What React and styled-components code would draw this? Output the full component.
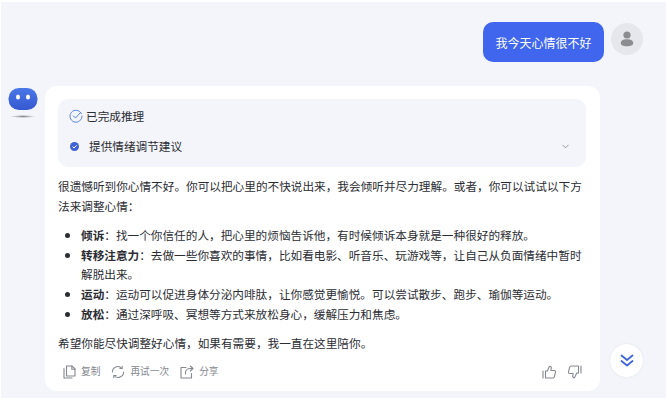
import React from "react";
import styled, { createGlobalStyle } from "styled-components";
import { ChevronDown } from "lucide-react";

const GlobalStyle = createGlobalStyle`
  html, body {
    margin: 0;
    padding: 0;
    background: #fff;
  }
  body {
    width: 669px;
    height: 413px;
    overflow: hidden;
    font-family: "Noto Sans CJK SC", "Liberation Sans", sans-serif;
  }
`;

const Page = styled.div`
  width: 665px;
  height: 396px;
  margin: 2px 0 0 1px;
  background: #f3f5fa;
  box-sizing: border-box;
  padding-top: 20px;
  overflow: hidden;
  display: flex;
  flex-direction: column;
`;

const UserRow = styled.div`
  display: flex;
  justify-content: flex-end;
  align-items: flex-start;
  gap: 7px;
  padding-right: 23px;
`;

const Bubble = styled.div`
  width: 121px;
  height: 40px;
  box-sizing: border-box;
  border-radius: 10px;
  background: #3f66ec;
  color: #fff;
  font-size: 12px;
  display: flex;
  align-items: center;
  justify-content: center;
`;

const UserAvatar = styled.div`
  width: 32px;
  height: 32px;
  margin-top: 1px;
  border-radius: 50%;
  background: #e6e7ec;
  display: flex;
  align-items: center;
  justify-content: center;
`;

const BotRow = styled.div`
  display: flex;
  align-items: flex-start;
  margin-top: 24px;
  padding-left: 7px;
`;

const BotAvatar = styled.div`
  width: 30px;
  height: 32px;
  margin-top: 2px;
  margin-right: 7px;
  flex: none;
`;

const Card = styled.div`
  width: 555px;
  height: 305px;
  flex: none;
  box-sizing: border-box;
  background: #fff;
  border-radius: 12px;
  padding: 13px 14px 0 13px;
  color: #2b2d33;
  font-size: 11.65px;
  line-height: 19.6px;
`;

const ThinkBox = styled.div`
  height: 68px;
  box-sizing: border-box;
  background: #f3f5fa;
  border-radius: 10px;
  padding: 6px 15px 0 11px;
`;

const ThinkTitle = styled.div`
  display: flex;
  align-items: center;
  gap: 3px;
  height: 20px;
  margin-top: 1px;
`;

const ThinkStep = styled.div`
  display: flex;
  align-items: center;
  height: 20px;
  margin-top: 10px;
  padding-left: 1px;
`;

const StepLabel = styled.span`
  margin-left: 10px;
  flex: 1;
`;

const Paragraph = styled.p`
  margin: ${(p) => p.$top || 0}px 0 0;
`;

const List = styled.ul`
  margin: 10px 0 0;
  padding: 0 0 0 23px;
  list-style: disc;
`;

const Item = styled.li`
  & > b {
    font-weight: 700;
  }
`;

const Actions = styled.div`
  display: flex;
  align-items: center;
  margin-top: 9px;
  padding: 0 4px 0 5px;
  color: #85888f;
  font-size: 9.7px;
`;

const Action = styled.span`
  display: flex;
  align-items: center;
  gap: 5px;
  margin-right: 11px;
`;

const Votes = styled.span`
  display: flex;
  gap: 12px;
  margin-left: auto;
`;

const ScrollButton = styled.div`
  width: 33px;
  height: 33px;
  margin: 258px 0 0 10px;
  flex: none;
  border-radius: 50%;
  background: #fff;
  box-shadow: 0 0 2px rgba(30, 40, 80, 0.12);
  display: flex;
  align-items: center;
  justify-content: center;
`;

const PersonIcon = () => (
  <svg width="14" height="16" viewBox="0 0 14 16">
    <circle cx="7" cy="4" r="3.6" fill="#8b8c90" />
    <path d="M0.8 12c0-2.4 2.2-3.8 6.2-3.8s6.2 1.4 6.2 3.8c0 2.2-2.4 3.2-6.2 3.2S0.8 14.200.8 12z" fill="#8b8c90" />
  </svg>
);

const RobotIcon = () => (
  <svg width="30" height="32" viewBox="0 0 30 32">
    <defs>
      <linearGradient id="head" x1="0" y1="0" x2="0" y2="1">
        <stop offset="0" stopColor="#4a78e6" />
        <stop offset="1" stopColor="#3558d0" />
      </linearGradient>
      <radialGradient id="shade">
        <stop offset="0" stopColor="#85868c" />
        <stop offset="1" stopColor="#85868c" stopOpacity="0" />
      </radialGradient>
    </defs>
    <rect x="0.500" y="0" width="29" height="22" rx="10.500" fill="url(#head)" />
    <ellipse cx="10" cy="9" rx="2" ry="2.500" fill="#fff" />
    <ellipse cx="20" cy="9" rx="2" ry="2.500" fill="#fff" />
    <ellipse cx="15" cy="28.500" rx="13" ry="1.500" fill="url(#shade)" />
  </svg>
);

const DoneIcon = () => (
  <svg width="14" height="14" viewBox="0 0 14 14" fill="none" stroke="#5a83dc" strokeWidth="1" strokeLinecap="round" strokeLinejoin="round">
    <path d="M12.400 4.600A6 6 0 1 0 13 7" />
    <path d="M4.300 6.800 6.500 9l5.200-5.600" />
  </svg>
);

const StepIcon = () => (
  <svg width="9" height="9" viewBox="0 0 9 9">
    <circle cx="4.500" cy="4.500" r="4.500" fill="#3f63d6" />
    <path d="M2.500 4.600 4 6l2.600-2.700" fill="none" stroke="#fff" strokeWidth="1" />
  </svg>
);

const Glyph = styled.svg`
  flex: none;
  fill: none;
  stroke: #85888f;
  stroke-width: 1.1;
  stroke-linejoin: round;
  stroke-linecap: round;
`;

const CopyIcon = () => (
  <Glyph width="13" height="14" viewBox="0 0 13 14">
    <path d="M3.500 1h5.500l3 3v7H3.500z" />
    <path d="M8.800 1v3.200H12" />
    <path d="M1 3.500V13h8" />
  </Glyph>
);

const RetryIcon = () => (
  <Glyph width="14" height="14" viewBox="0 0 15 14">
    <path d="M1.500 7a5.800 5.800 0 0 1 10-4" />
    <path d="M12 .8V3.300H9.500" />
    <path d="M13.500 7a5.800 5.800 0 0 1-10 4" />
    <path d="M3 13.200V10.700h2.500" />
  </Glyph>
);

const ShareIcon = () => (
  <Glyph width="14" height="14" viewBox="0 0 14 14">
    <path d="M6 2.500H1V13h10.500V8.500" />
    <path d="M5.500 9V7.500c0-2.500 2-4 5-4h2" />
    <path d="M10.300 1 13 3.500 10.300 6" />
  </Glyph>
);

const LikeIcon = () => (
  <Glyph width="14" height="14" viewBox="0 0 14 14">
    <path d="M1 6v7" />
    <path d="M3.500 6h1.800L7.500 1.200c1.500 0 2 1 1.800 2L8.800 5.500h3.400c1 0 1.500.8 1.300 1.600l-1.200 4.700c-.2.700-.7 1.200-1.500 1.200H3.500z" />
  </Glyph>
);

const DislikeIcon = () => (
  <Glyph width="14" height="14" viewBox="0 0 14 14">
    <path d="M13 1v7" />
    <path d="M10.500 8H8.700L6.500 12.800c-1.500 0-2-1-1.800-2l.5-2.300H1.800c-1 0-1.500-.8-1.300-1.600L1.700 2.200C1.900 1.500 2.400 1 3.200 1h7.300z" />
  </Glyph>
);

const DoubleChevron = () => (
  <svg width="16" height="16" viewBox="0 0 16 16" fill="none" stroke="#3f66d8" strokeWidth="1.800" strokeLinecap="round" strokeLinejoin="round">
    <path d="M2.500 2.500 8 7l5.500-4.500" />
    <path d="M2.500 8 8 12.500 13.500 8" />
  </svg>
);

const App = () => (
  <>
    <GlobalStyle />
    <Page>
      <UserRow>
        <Bubble>我今天心情很不好</Bubble>
        <UserAvatar>
          <PersonIcon />
        </UserAvatar>
      </UserRow>
      <BotRow>
        <BotAvatar>
          <RobotIcon />
        </BotAvatar>
        <Card>
          <ThinkBox>
            <ThinkTitle>
              <DoneIcon />
              已完成推理
            </ThinkTitle>
            <ThinkStep>
              <StepIcon />
              <StepLabel>提供情绪调节建议</StepLabel>
              <ChevronDown size={11} strokeWidth={1.4} color="#5f6268" />
            </ThinkStep>
          </ThinkBox>
          <Paragraph $top={9}>
            很遗憾听到你心情不好。你可以把心里的不快说出来，我会倾听并尽力理解。或者，你可以试试以下方法来调整心情：
          </Paragraph>
          <List>
            <Item>
              <b>倾诉</b>：找一个你信任的人，把心里的烦恼告诉他，有时候倾诉本身就是一种很好的释放。
            </Item>
            <Item>
              <b>转移注意力</b>：去做一些你喜欢的事情，比如看电影、听音乐、玩游戏等，让自己从负面情绪中暂时解脱出来。
            </Item>
            <Item>
              <b>运动</b>：运动可以促进身体分泌内啡肽，让你感觉更愉悦。可以尝试散步、跑步、瑜伽等运动。
            </Item>
            <Item>
              <b>放松</b>：通过深呼吸、冥想等方式来放松身心，缓解压力和焦虑。
            </Item>
          </List>
          <Paragraph $top={10}>希望你能尽快调整好心情，如果有需要，我一直在这里陪你。</Paragraph>
          <Actions>
            <Action>
              <CopyIcon />
              复制
            </Action>
            <Action>
              <RetryIcon />
              再试一次
            </Action>
            <Action>
              <ShareIcon />
              分享
            </Action>
            <Votes>
              <LikeIcon />
              <DislikeIcon />
            </Votes>
          </Actions>
        </Card>
        <ScrollButton>
          <DoubleChevron />
        </ScrollButton>
      </BotRow>
    </Page>
  </>
);

export default App;
